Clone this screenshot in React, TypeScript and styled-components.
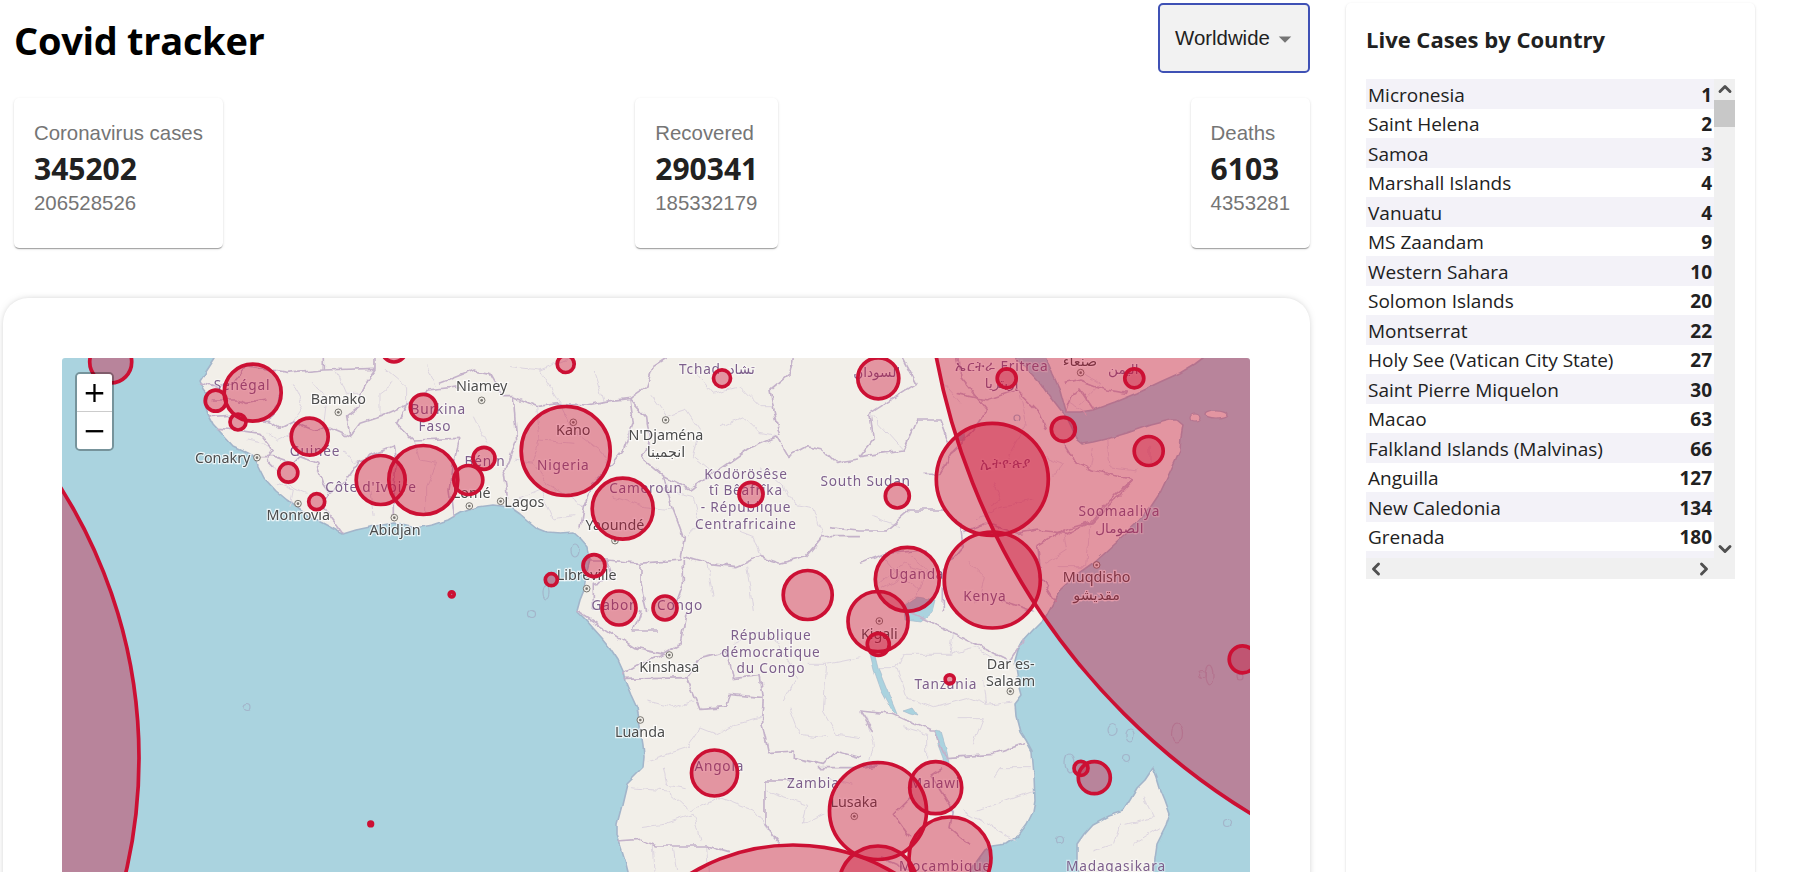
import React from 'react';
import styled, { createGlobalStyle } from 'styled-components';
import { ChevronDown, ChevronLeft, ChevronRight, ChevronUp } from 'lucide-react';

const GlobalStyle = createGlobalStyle`
  html, body {
    margin: 0;
    padding: 0;
    height: 872px;
    overflow: hidden;
    background: #fff;
  }
  * { box-sizing: border-box; }
`;

const App_ = styled.div`
  display: flex;
  gap: 36px;
  height: 872px;
  overflow: hidden;
  padding: 3px 46px 0 3px;
  font-family: 'Liberation Sans', Arial, sans-serif;
`;

const Left = styled.div`
  flex: 1;
  min-width: 0;
`;

const Header = styled.div`
  display: flex;
  align-items: center;
  justify-content: space-between;
  height: 70px;
  margin: 0 0 25px;
  padding-left: 11px;
`;

const Title = styled.h1`
  margin: 0;
  padding-top: 3px;
  font: 700 38px 'Open Sans', sans-serif;
  color: #000;
  letter-spacing: -0.3px;
`;

const Select = styled.div`
  display: flex;
  align-items: center;
  width: 152px;
  height: 70px;
  padding: 1px 0 0 15px;
  background: #f2f2f2;
  border: 2.5px solid #3f51b5;
  border-radius: 5px;
  color: #212121;
  font-size: 20.4px;
`;

const Stats = styled.div`
  display: flex;
  justify-content: space-between;
  padding-left: 11px;
  margin-bottom: 50px;
`;

const StatCard = styled.div`
  height: 150px;
  padding: 21px 20px 0 20px;
  background: #fff;
  border-radius: 5px;
  box-shadow: 0 2px 1px -1px rgba(0, 0, 0, 0.2), 0 1px 1px 0 rgba(0, 0, 0, 0.14), 0 1px 3px 0 rgba(0, 0, 0, 0.12);
`;

const StatLabel = styled.div`
  font-size: 20.4px;
  line-height: 28px;
  color: #757575;
`;

const StatValue = styled.div`
  padding-top: 2px;
  font: 700 30px/40px 'Open Sans', sans-serif;
  color: #212121;
`;

const StatTotal = styled.div`
  font-size: 20.4px;
  line-height: 28px;
  color: #757575;
`;

const MapCard = styled.div`
  padding: 60px 60px 40px 59px;
  height: 700px;
  background: #fff;
  border-radius: 25px;
  box-shadow: 0 0 8px -4px rgba(0, 0, 0, 0.5);
`;

const MapFrame = styled.div`
  position: relative;
  height: 600px;
  overflow: hidden;
  border-radius: 3px;
`;

const MapSvg = styled.svg`
  display: block;
  width: 100%;
  height: 100%;
`;

const TileLayer = styled.g`
  filter: blur(0.35px);
`;

const ZoomControl = styled.div`
  position: absolute;
  top: 14px;
  left: 13px;
  width: 39px;
  border: 2px solid rgba(0, 0, 0, 0.3);
  border-radius: 5px;
  background-clip: padding-box;
`;

const ZoomButton = styled.div`
  display: flex;
  align-items: center;
  justify-content: center;
  height: 37px;
  background: #fff;
  color: #000;
  font: 400 28px 'DejaVu Sans', sans-serif;
  &:first-child {
    border-bottom: 1px solid #ccc;
    border-radius: 3px 3px 0 0;
    height: 38px;
  }
  &:last-child { border-radius: 0 0 3px 3px; }
`;

const Side = styled.div`
  width: 409px;
  flex: none;
  height: 900px;
  padding: 0 20px;
  background: #fff;
  border-radius: 5px;
  box-shadow: 0 2px 1px -1px rgba(0, 0, 0, 0.2), 0 1px 1px 0 rgba(0, 0, 0, 0.14), 0 1px 3px 0 rgba(0, 0, 0, 0.12);
`;

const SideTitle = styled.h3`
  margin: 0;
  height: 76px;
  padding: 20px 0 0 0;
  font: 700 22px/32px 'Open Sans', sans-serif;
  color: #212121;
`;

const TableBox = styled.div`
  display: grid;
  grid-template-columns: 348px 21px;
  grid-template-rows: 479px 21px;
  height: 500px;
`;

const Rows = styled.div`
  &::after {
    content: '';
    display: block;
    height: 7px;
    background: #f3f2f8;
  }
`;

const Row = styled.div`
  display: flex;
  justify-content: space-between;
  align-items: center;
  height: 29.5px;
  padding: 2px 2px 0;
  font: 400 19px 'Open Sans', sans-serif;
  color: #212121;
  &:nth-child(odd) { background: #f3f2f8; }
  strong { font-weight: 700; }
`;

const VBar = styled.div`
  display: flex;
  flex-direction: column;
  align-items: center;
  grid-row: 1 / 3;
  grid-column: 2;
  padding-bottom: 20px;
  background: #f0f0f0;
  color: #505050;
`;

const VTrack = styled.div`
  flex: 1;
  width: 100%;
  padding-top: 1px;
`;

const VThumb = styled.div`
  width: 100%;
  height: 27px;
  background: #c8c8c8;
`;

const HBar = styled.div`
  display: flex;
  justify-content: space-between;
  align-items: center;
  background: #f0f0f0;
  color: #505050;
`;

const CityLabel = styled.text`
  font: 400 43px 'Noto Sans', 'DejaVu Sans', sans-serif;
  fill: #4c4c4c;
  stroke: rgba(255, 255, 255, 0.75);
  stroke-width: 7px;
  paint-order: stroke;
  text-anchor: middle;
  dominant-baseline: middle;
`;

const CountryLabel = styled(CityLabel)`
  font-size: 41px;
  fill: #7d5f8c;
  stroke: rgba(255, 255, 255, 0.4);
  letter-spacing: 2.4px;
`;

const COUNTRIES: [string, number][] = [
  ['Micronesia', 1], ['Saint Helena', 2], ['Samoa', 3], ['Marshall Islands', 4],
  ['Vanuatu', 4], ['MS Zaandam', 9], ['Western Sahara', 10], ['Solomon Islands', 20],
  ['Montserrat', 22], ['Holy See (Vatican City State)', 27], ['Saint Pierre Miquelon', 30],
  ['Macao', 63], ['Falkland Islands (Malvinas)', 66], ['Anguilla', 127],
  ['New Caledonia', 134], ['Grenada', 180],
];

const AFRICA = '215,340 215,358 200,381 204,390 208,395 205,405 208,414 214,425 222,434 233,446 246,452 256,457 258,466 264,478 275,490 287,500 300,510 313,518 328,526 343,534 356,530 370,527 393,523 415,528 433,525 448,520 460,513 478,507 493,505 510,507 520,514 527,520 537,528 547,532 560,533 573,532 582,540 588,547 590,560 586,575 584,590 580,600 577,611 586,620 593,628 602,638 610,648 618,660 623,671 625,681 631,695 637,708 640,725 643,744 644,757 643,768 635,776 627,784 622,805 617,824 617,835 620,844 625,860 630,880 965,880 972,868 985,850 992,846 1006,844 1018,836 1027,824 1033,812 1035,801 1034,775 1032,751 1026,740 1020,731 1016,716 1015,704 1022,695 1018,680 1015,661 1018,650 1023,641 1033,630 1045,618 1060,590 1076,575 1093,563 1115,543 1137,523 1150,508 1160,493 1170,472 1180,450 1181,437 1183,425 1177,420 1170,420 1150,425 1127,433 1110,438 1093,442 1082,444 1077,440 1072,428 1067,418 1060,410 1050,397 1040,383 1028,370 1017,358 1012,340';
const ARABIA = '1040,340 1046,358 1053,375 1060,390 1066,412 1080,412 1093,410 1115,402 1137,393 1160,382 1180,373 1195,364 1203,358 1215,340';
const MADAGASCAR = '1153,768 1157,778 1160,788 1165,800 1170,814 1166,826 1157,844 1155,858 1153,880 1078,880 1077,860 1077,844 1084,834 1093,824 1108,816 1123,811 1130,800 1137,788 1145,780';

// small islands, [cx, cy, rx, ry], page coordinates
const ISLANDS = [
  [247.5, 707, 3.5, 3.5], [532, 614, 3.5, 3.5], [575, 551, 4, 6], [546, 592, 3, 7],
  [1112, 730, 5, 5.5], [1130, 735, 4, 6], [1125, 759, 3.5, 3.5], [1060, 840, 3.5, 3.5],
  [1227, 823, 3.5, 3.5], [1177, 733, 5.5, 10], [1202, 674, 3.5, 3.5], [1209, 675, 4, 10],
  [1070, 763, 5, 9], [1240, 677, 3, 3], [1017, 418, 3, 3],
];
const SOCOTRA = [[1216, 414, 11, 4], [1195, 418, 5, 4]];

const LAKES = [
  '905,606 918,597 935,600 932,612 920,622 906,620',
  '869,654 873,670 880,690 892,712 897,714 887,690 878,668 874,652',
  '935,731 941,732 947,752 949,762 944,761 938,745',
  '903,710 912,707 918,715 910,713',
  '958,434 964,432 965,440 960,442',
];

type Tile = {
  x: number;
  y: number;
  borders: string[];
  minor: string[];
  cities: [string, number, number][];
  countries: [string, number, number][];
  dots: [number, number][];
};

const TILES: Tile[] = [
  {
    x: 60, y: 350,
    borders: [
      '420,95 470,110 520,100 560,50 620,60 680,70 790,60 945,55',
      '790,24 790,60', '945,24 945,55 920,90 900,130 900,170 860,200 870,260',
      '665,130 630,215 660,235 700,215 760,240 810,235 870,260 900,220 960,200 1040,165',
      '1040,165 1010,220 1060,270 1200,265',
      '450,200 530,195 570,210 630,215', '470,235 530,240 600,250 640,300 620,330 640,350',
      '590,320 640,320 700,340 720,320 770,340 790,400 810,430 790,470 850,552',
      '810,430 860,390 900,330 1000,290 1010,340 1000,420 1000,510',
      '1200,265 1180,340 1170,420 1180,500', '1040,165 1100,120 1200,110',
      '455,150 530,150 560,160 620,150',
    ],
    minor: [
      '700,100 730,170 700,215', '830,60 860,130 900,130', '980,60 1040,110 1040,165',
      '640,350 670,400 740,430', '850,300 880,340 900,330', '620,250 650,270 690,250',
      '1060,270 1080,330 1130,340 1100,410 1100,500', '1100,50 1130,110', '930,420 940,500',
      '760,100 800,150 790,235', '1000,100 960,130 960,200', '560,270 610,280 640,300', '650,400 700,420 690,470',
    ],
    cities: [['Bamako', 835, 152], ['Conakry', 488, 327], ['Monrovia', 715, 498], ['Abidjan', 1005, 545]],
    countries: [['Sénégal', 546, 110], ['Guinée', 765, 308], ['Burkina', 1135, 180], ['Faso', 1125, 232], ["Côte d'Ivoire", 933, 415]],
    dots: [[835, 187], [591, 323], [714, 461], [1003, 503]],
  },
  {
    x: 460, y: 350,
    borders: [
      '-60,100 40,60 90,70 130,140 160,140 230,170 300,160 380,165 430,155 510,145',
      '510,145 560,110 580,50 620,24',
      '510,145 520,220 490,300 450,350 400,400 370,470 360,530',
      '510,145 560,200 570,280 540,320 610,380 620,420 640,480 670,560 660,630 540,640 440,630',
      '610,380 690,420 760,370 860,300 950,260 985,320',
      '1000,24 990,70 930,120 940,170 960,260',
      '670,620 740,640 830,650 900,620 960,640 1040,620 1090,560 1200,560',
      '985,320 1040,290 1090,300 1130,340 1200,330',
      '160,140 170,270 130,370 140,450',
      '540,640 540,700 560,783', '670,630 670,700 640,783',
      '370,630 440,630 460,690 400,700 400,783',
    ],
    minor: [
      '240,60 300,160', '230,170 240,270 220,340 260,400 310,430 370,470',
      '300,160 340,240 420,300 450,350', '240,270 340,280', '160,330 220,340', '170,450 240,420 280,510 340,500',
      '570,130 620,200 680,180 720,240 700,320 760,370', '780,230 850,200 900,250 950,260',
      '840,110 900,170 940,170', '700,60 760,130 840,110', '620,420 700,440 720,520 680,560',
      '830,540 880,560 900,620', '1000,460 1060,470 1090,560', '640,480 550,470 460,440', '40,200 80,280',
      '150,50 240,60 330,24', '400,60 430,155', '900,350 980,420 1000,460', '740,640 760,740', '860,650 880,783',
    ],
    cities: [['Niamey', 65, 113], ['Kano', 340, 245], ['Lomé', 35, 432], ['Lagos', 193, 460], ["N'Djaména", 618, 260], ['انجمينا', 618, 310], ['Yaoundé', 465, 530], ['Libreville', 380, 680]],
    countries: [['Nigeria', 310, 348], ['Bénin', 75, 338], ['Tchad', 720, 60], ['تشاد', 845, 60], ['Kodörösêse', 858, 375], ['tî Bêafrîka', 858, 425], ['- République', 858, 476], ['Centrafricaine', 858, 525], ['Cameroun', 558, 418], ['Gabon', 465, 770], ['Congo', 660, 768]],
    dots: [[65, 151], [340, 217], [122, 454], [28, 468], [617, 210], [465, 572], [380, 716]],
  },
  {
    x: 860, y: 350,
    borders: [
      '130,24 170,100 30,190 40,270 0,320', '0,320 60,310 130,300 170,210 240,210 270,290',
      '190,370 240,370 280,300 340,240 380,180 340,130 300,80 290,24',
      '-90,530 0,540 80,540 150,480 250,480 300,520 310,590',
      '310,545 380,520 470,550 530,540 620,550 690,520 770,430 820,390',
      '530,590 610,540 700,515 820,390 700,360 640,330 610,280',
      '530,590 540,680 590,760', '290,130 380,150 470,120 540,190 560,240', '620,185 640,130 660,120 700,180',
      '620,100 660,90 740,120 800,130', '0,640 80,610 200,600', '310,590 250,660 250,783', '420,750 520,783',
    ],
    minor: [
      '30,190 130,300', '700,300 690,360', '740,270 750,350 830,360', '870,290 870,340',
      '560,640 620,600 610,540', '590,650 680,650 690,520', '400,400 420,450 390,470', '350,510 420,470 520,450',
      '100,650 180,720 120,783', '60,700 130,640 220,680', '330,640 370,680 350,760', '250,100 300,160',
      '670,70 720,100 660,160', '620,150 680,190', '480,130 500,220 440,330', '560,320 610,340 580,380',
      '70,620 120,680 60,720', '150,620 200,660 180,720', '40,500 120,530',
    ],
    cities: [['صنعاء', 660, 35], ['Muqdisho', 710, 685], ['مقديشو', 710, 738]],
    countries: [['السودان', 50, 70], ['ኤርትራ Eritrea', 425, 52], ['إريتريا', 425, 103], ['اليمن', 790, 62], ['ኢትዮጵያ', 437, 342], ['South Sudan', 17, 396], ['Soomaaliya', 778, 486], ['الصومال', 778, 537], ['Uganda', 170, 676], ['Kenya', 375, 741]],
    dots: [[662, 68], [710, 645]],
  },
  {
    x: 460, y: 611,
    borders: [
      '490,205 680,200 720,295 800,290 810,250 910,260 905,330 925,425 1000,420 1000,440 1090,460 1130,420 1200,440',
      '915,510 1000,510', '915,510 915,640 960,700', '470,690 540,685 590,705 740,705 810,725',
      '680,0 660,100 610,130 540,160 490,190', '350,0 430,50 520,110 610,130',
      '540,0 520,60 600,60', '800,120 820,200 900,190 910,260', '680,200 720,140 800,120',
    ],
    minor: [
      '565,270 640,290 700,270', '560,450 680,410 720,350 770,370 830,340 905,320',
      '510,530 620,540 690,600 780,560 880,600 950,690', '540,650 610,640 700,610 720,690',
      '610,470 620,520 680,530', '1100,160 1090,300 1130,370 1200,380', '990,290 1020,370 1100,380',
      '960,100 1010,200 970,270', '580,705 585,783', '640,710 650,783', '740,705 745,783', '920,540 1040,580 1030,640 1090,610',
      '820,100 900,60 960,100', '1100,500 1180,520', '1040,160 1100,160 1200,140',
    ],
    cities: [['Kinshasa', 628, 172], ['Luanda', 540, 367], ['Lusaka', 1182, 578]],
    countries: [['République', 933, 75], ['démocratique', 933, 126], ['du Congo', 933, 176], ['Angola', 778, 468], ['Zambia', 1060, 520]],
    dots: [[628, 132], [541, 327], [1183, 616]],
  },
  {
    x: 860, y: 611,
    borders: [
      '225,360 260,440 400,430 500,395', '0,300 100,310 210,360 225,360',
      '130,0 290,70 450,150 490,90', '0,300 40,360', '-130,470 0,470 60,460',
      '240,470 210,490 280,600 270,650 330,700', '150,560 100,610 150,680', '60,740 150,780',
    ],
    minor: [
      '110,170 130,130 270,130 350,110 440,170', '60,170 110,170 140,260 220,290 330,260 380,280 460,270',
      '290,320 370,320 340,400', '400,500 420,470 510,470', '350,600 520,540', '310,600 470,690',
      '20,320 40,400 30,450', '130,350 200,370 200,440', '780,640 760,700 700,720', '850,560 880,620 800,640',
      '820,700 900,650', '280,70 270,130', '370,200 380,280',
    ],
    cities: [['Kigali', 58, 72], ['Dar es-', 452, 163], ['Salaam', 452, 213]],
    countries: [['Tanzania', 258, 222], ['Malawi', 225, 520], ['Moçambique', 255, 768], ['Madagasikara', 768, 770]],
    dots: [[58, 30], [451, 241]],
  },
];

// case circles, [cx, cy, r], page coordinates
const CIRCLES = [
  [-366, 758, 505], [1605, 233, 680], [793, 1043, 198], [110.7, 362, 21], [252.7, 392.7, 28.5],
  [215.7, 400.7, 10.5], [238, 422, 8], [309.7, 436.7, 18.5], [423.3, 407.3, 13], [288.3, 472.7, 9.5],
  [316.7, 501.7, 8], [380.7, 480, 24.5], [423.3, 480, 34.5], [394, 350, 12], [451.7, 594.3, 2.5],
  [370.7, 823.9, 1.8], [565.7, 364, 8.5], [722, 378.3, 8.5], [565.7, 451, 44.5], [484, 458.3, 11],
  [468.3, 480, 14.5], [622.7, 508.7, 30.5], [751, 494.3, 12], [594, 565.7, 11], [551.3, 579.7, 6],
  [619, 608, 17], [665, 608, 12], [807.7, 595, 24.5], [878.3, 378.3, 20.5], [1006.7, 378.3, 9.5],
  [1134.3, 378.3, 9.5], [1063.3, 429.3, 12], [1148.7, 451, 14.5], [992.3, 479.3, 56], [897.3, 496, 12],
  [907.3, 579.3, 32], [992.3, 580, 48], [878, 621.5, 30], [878.3, 644.3, 11], [949.7, 679.3, 4.5],
  [1242.7, 659.3, 13.5], [1081, 768.3, 7], [1094.3, 777.7, 16], [935.7, 787.7, 26], [878, 811, 48.5],
  [950, 858, 41], [878, 885, 39], [714.5, 773, 23],
];

const STATS = [
  { label: 'Coronavirus cases', value: '345202', total: '206528526' },
  { label: 'Recovered', value: '290341', total: '185332179' },
  { label: 'Deaths', value: '6103', total: '4353281' },
];

const MapLines = ({ tile }: { tile: Tile }) => (
  <g transform={`translate(${tile.x} ${tile.y}) scale(0.3333)`}>
    {tile.minor.map((pts, i) => (
      <polyline key={i} points={pts} fill="none" stroke="#dcd4df" strokeWidth={3} strokeLinejoin="round" />
    ))}
    {tile.borders.map((pts, i) => (
      <polyline key={i} points={pts} fill="none" stroke="#c4b2ca" strokeWidth={5} strokeLinejoin="round" />
    ))}
  </g>
);

const MapText = ({ tile }: { tile: Tile }) => (
  <g transform={`translate(${tile.x} ${tile.y}) scale(0.3333)`}>
    {tile.countries.map(([t, x, y]) => (
      <CountryLabel key={t} x={x} y={y}>{t}</CountryLabel>
    ))}
    {tile.cities.map(([t, x, y]) => (
      <CityLabel key={t} x={x} y={y}>{t}</CityLabel>
    ))}
    {tile.dots.map(([x, y], i) => (
      <g key={i}>
        <circle cx={x} cy={y} r={10} fill="#f2efe9" stroke="#77746f" strokeWidth={3} />
        <circle cx={x} cy={y} r={4} fill="#77746f" />
      </g>
    ))}
  </g>
);

const CovidMap = () => (
  <MapSvg viewBox="0 0 1188 600">
    <defs>
      <filter id="rough" filterUnits="userSpaceOnUse" x="40" y="340" width="1230" height="640">
        <feTurbulence type="fractalNoise" baseFrequency="0.09" numOctaves={2} seed={4} />
        <feDisplacementMap in="SourceGraphic" scale={7} xChannelSelector="R" yChannelSelector="G" />
      </filter>
      <filter id="coast" filterUnits="userSpaceOnUse" x="40" y="340" width="1230" height="640">
        <feTurbulence type="fractalNoise" baseFrequency="0.06" numOctaves={2} seed={9} />
        <feDisplacementMap in="SourceGraphic" scale={4} xChannelSelector="R" yChannelSelector="G" />
      </filter>
    </defs>
    <g transform="translate(-62 -358)">
      <rect x="62" y="358" width="1188" height="600" fill="#aad3df" />
      <TileLayer>
        <g filter="url(#coast)">
          {[AFRICA, ARABIA, MADAGASCAR].map((pts, i) => (
            <polygon key={i} points={pts} fill="#f2efe9" stroke="#a3b5ca" strokeWidth={1.6} strokeLinejoin="round" />
          ))}
          {ISLANDS.map(([cx, cy, rx, ry], i) => (
            <ellipse key={i} cx={cx} cy={cy} rx={rx} ry={ry} fill="none" stroke="#a3b5ca" strokeWidth={1.2} />
          ))}
          {SOCOTRA.map(([cx, cy, rx, ry], i) => (
            <ellipse key={i} cx={cx} cy={cy} rx={rx} ry={ry} fill="#f2efe9" stroke="#a3b5ca" strokeWidth={1.2} />
          ))}
          {LAKES.map((pts, i) => (
            <polygon key={i} points={pts} fill="#aad3df" stroke="#a3b5ca" strokeWidth={0.6} />
          ))}
        </g>
        <g filter="url(#rough)">
          {TILES.map((tile) => <MapLines key={tile.x * 1000 + tile.y} tile={tile} />)}
        </g>
        {TILES.map((tile) => <MapText key={tile.x * 1000 + tile.y} tile={tile} />)}
      </TileLayer>
      {CIRCLES.map(([cx, cy, r], i) => (
        <circle key={i} cx={cx} cy={cy} r={r} fill="#cc1034" fillOpacity={0.4} stroke="#cc1034" strokeWidth={3.7} />
      ))}
    </g>
  </MapSvg>
);

function App() {
  return (
    <App_>
      <GlobalStyle />
      <Left>
        <Header>
          <Title>Covid tracker</Title>
          <Select>
            Worldwide
            <svg width="30" height="30" viewBox="0 0 24 24" fill="#757575"><path d="M7 10l5 5 5-5z" /></svg>
          </Select>
        </Header>
        <Stats>
          {STATS.map((s) => (
            <StatCard key={s.label}>
              <StatLabel>{s.label}</StatLabel>
              <StatValue>{s.value}</StatValue>
              <StatTotal>{s.total}</StatTotal>
            </StatCard>
          ))}
        </Stats>
        <MapCard>
          <MapFrame>
            <CovidMap />
            <ZoomControl>
              <ZoomButton>+</ZoomButton>
              <ZoomButton>−</ZoomButton>
            </ZoomControl>
          </MapFrame>
        </MapCard>
      </Left>
      <Side>
        <SideTitle>Live Cases by Country</SideTitle>
        <TableBox>
          <Rows>
            {COUNTRIES.map(([name, cases]) => (
              <Row key={name}>
                <span>{name}</span>
                <strong>{cases}</strong>
              </Row>
            ))}
          </Rows>
          <VBar>
            <ChevronUp size={20} strokeWidth={3.5} />
            <VTrack><VThumb /></VTrack>
            <ChevronDown size={20} strokeWidth={3.5} />
          </VBar>
          <HBar>
            <ChevronLeft size={20} strokeWidth={3.5} />
            <ChevronRight size={20} strokeWidth={3.5} />
          </HBar>
        </TableBox>
      </Side>
    </App_>
  );
}

export default App;
